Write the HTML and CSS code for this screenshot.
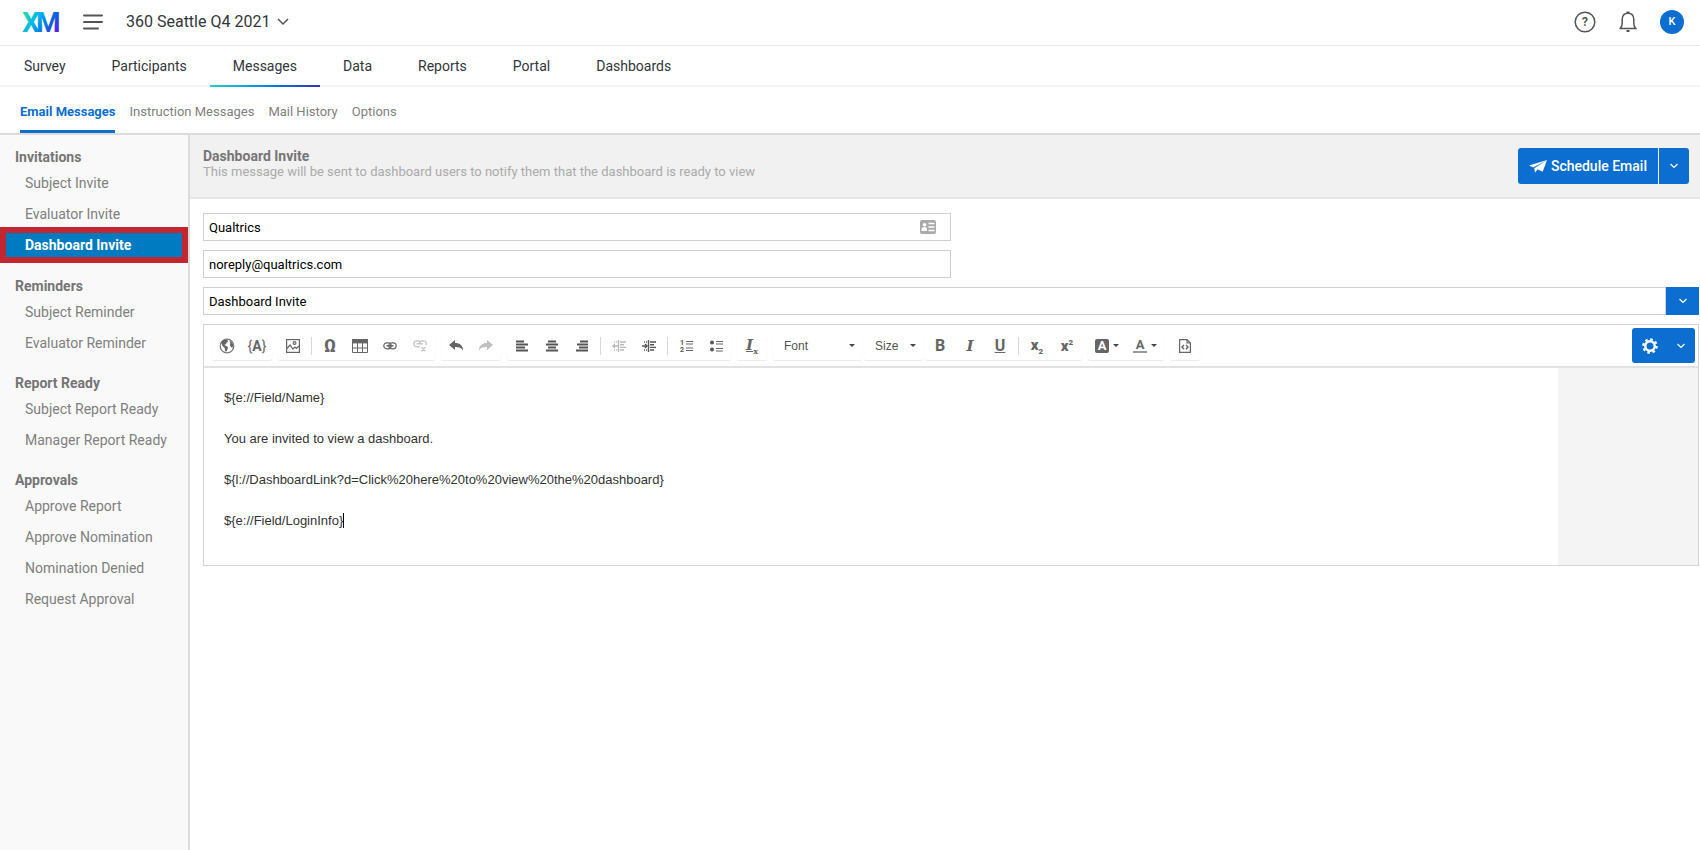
FILE: index.html
```html
<!DOCTYPE html>
<html lang="en">
<head>
  <meta charset="UTF-8">
  <meta name="viewport" content="width=device-width, initial-scale=1.0">
  <title>360 Seattle Q4 2021 - Messages</title>
  <link rel="stylesheet" href="styles.css">
</head>
<body>
<header class="topbar">
  <a href="#" class="logo" aria-label="XM">
    <svg width="38" height="26" viewBox="0 0 38 26">
      <defs>
        <linearGradient id="xm" gradientUnits="userSpaceOnUse" x1="4" y1="2" x2="36" y2="22">
          <stop offset="0" stop-color="#21dbaa"/>
          <stop offset="0.35" stop-color="#00b4ef"/>
          <stop offset="0.7" stop-color="#0768dd"/>
          <stop offset="1" stop-color="#5f1ae5"/>
        </linearGradient>
      </defs>
      <text class="logo-text" x="0" y="23" fill="url(#xm)">X</text>
      <text class="logo-text" x="14" y="23" fill="url(#xm)">M</text>
    </svg>
  </a>
  <button class="icon-btn menu-btn" aria-label="Menu">
    <svg width="20" height="16" viewBox="0 0 20 16" fill="none" stroke="#555" stroke-width="2" stroke-linecap="round"><path d="M1 1.500h18M1 8h18M1 14.500h14"/></svg>
  </button>
  <button class="project">360 Seattle Q4 2021
    <svg width="12" height="8" viewBox="0 0 12 8" fill="none" stroke="#555" stroke-width="1.500"><path d="M1 1l5 5 5-5"/></svg>
  </button>
  <div class="top-right">
    <button class="icon-btn" aria-label="Help">
      <svg width="22" height="22" viewBox="0 0 22 22"><circle cx="11" cy="11" r="9.800" fill="none" stroke="#555" stroke-width="1.500"/><text class="help-mark" x="11" y="15" text-anchor="middle" fill="#555">?</text></svg>
    </button>
    <button class="icon-btn" aria-label="Notifications">
      <svg width="18" height="22" viewBox="0 0 18 22" fill="none" stroke="#555" stroke-width="1.500" stroke-linejoin="round"><path d="M1 17.500c1.800-1.500 2.200-3 2.200-5V8.500C3.200 4.500 5.500 2.200 9 2.200s5.800 2.300 5.800 6.300v4c0 2 .4 3.500 2.200 5z"/><path d="M7.500 1.500h3M7.500 20h3" stroke-width="2"/></svg>
    </button>
    <button class="avatar">K</button>
  </div>
</header>

<nav class="tabs">
  <a href="#">Survey</a>
  <a href="#">Participants</a>
  <a href="#" class="active">Messages</a>
  <a href="#">Data</a>
  <a href="#">Reports</a>
  <a href="#">Portal</a>
  <a href="#">Dashboards</a>
</nav>

<nav class="subtabs">
  <a href="#" class="active">Email Messages</a>
  <a href="#">Instruction Messages</a>
  <a href="#">Mail History</a>
  <a href="#">Options</a>
</nav>

<div class="page">
  <aside class="sidebar">
    <h3>Invitations</h3>
    <a href="#">Subject Invite</a>
    <a href="#">Evaluator Invite</a>
    <a href="#" class="selected">Dashboard Invite</a>
    <h3>Reminders</h3>
    <a href="#">Subject Reminder</a>
    <a href="#">Evaluator Reminder</a>
    <h3>Report Ready</h3>
    <a href="#">Subject Report Ready</a>
    <a href="#">Manager Report Ready</a>
    <h3>Approvals</h3>
    <a href="#">Approve Report</a>
    <a href="#">Approve Nomination</a>
    <a href="#">Nomination Denied</a>
    <a href="#">Request Approval</a>
  </aside>

  <main class="main">
    <div class="message-header">
      <div>
        <h2>Dashboard Invite</h2>
        <p>This message will be sent to dashboard users to notify them that the dashboard is ready to view</p>
      </div>
      <div class="split-btn">
        <button class="schedule">
          <svg width="18" height="13" viewBox="0 0 18 13" fill="#fff"><path d="M18 0L0 5.500l4.300 2zM18 0L5.300 8.200l.7 4.600 2.200-3zM18 0L7.300 8.800l6.400 3z"/></svg>
          Schedule Email
        </button>
        <button class="schedule-more" aria-label="More schedule options">
          <svg width="8" height="6" viewBox="0 0 8 6" fill="none" stroke="#fff" stroke-width="1.200"><path d="M.5 1L4 4.500 7.500 1"/></svg>
        </button>
      </div>
    </div>

    <form class="message-form">
      <div class="field short">
        <input type="text" aria-label="From name" value="Qualtrics">
        <svg class="card-icon" width="16" height="14" viewBox="0 0 16 14"><rect width="16" height="14" rx="2" fill="#aaa"/><circle cx="4.500" cy="4.800" r="1.800" fill="#fff"/><path d="M1.500 11V9.500C1.500 7.800 3 7 4.500 7S7 7.800 7 9.500V11z" fill="#fff"/><path d="M8.500 3.500h6M8.500 7h6M8.500 10.500h6" stroke="#fff" stroke-width="1.600"/></svg>
      </div>
      <div class="field short">
        <input type="text" aria-label="Reply-to email" value="noreply@qualtrics.com">
      </div>
      <div class="field">
        <input type="text" aria-label="Subject" value="Dashboard Invite">
        <button type="button" class="subject-more" aria-label="Subject options">
          <svg width="8" height="6" viewBox="0 0 8 6" fill="none" stroke="#fff" stroke-width="1.200"><path d="M.5 1L4 4.500 7.500 1"/></svg>
        </button>
      </div>

      <div class="editor">
        <div class="toolbar">
          <div class="group">
            <button type="button" aria-label="Language"><svg width="16" height="16" viewBox="0 0 16 16"><circle cx="8" cy="8" r="6.800" fill="#fff" stroke="#777" stroke-width="1.200"/><path d="M2 4.500C3.500 2 6 1.500 8.500 2L9 3.500 7.500 5l-1 1.500L5 7l2 .8 2 1.400-.6 2.300L7 14l-1-1.500-.3-2.500L3.500 8z" fill="#666"/><path d="M10.500 2.500l2.500 1.800L14.300 7l-1 3-1.500-1.300L10.800 7l.6-1.600z" fill="#666"/></svg></button>
            <button type="button" class="glyph" aria-label="Piped text">{<b>A</b>}</button>
          </div>
          <div class="group">
            <button type="button" aria-label="Image"><svg width="14" height="14" viewBox="0 0 14 14" fill="none" stroke="#666" stroke-width="1.200"><rect x=".6" y=".6" width="12.800" height="12.800"/><circle cx="8.500" cy="4" r="1.400"/><path d="M1 9.500l3-3.500 3 4 2-2 1.500 1.500L13 7"/></svg></button>
            <span class="sep"></span>
            <button type="button" class="glyph omega" aria-label="Special character">Ω</button>
            <button type="button" aria-label="Table"><svg width="16" height="14" viewBox="0 0 16 14" fill="none" stroke="#666"><path d="M.5 4v9.500h15V4M.5 9h15M5.500 4v9.500M10.500 4v9.500"/><path d="M0 2.200h16" stroke-width="4.400"/></svg></button>
            <button type="button" aria-label="Link"><svg width="14" height="8" viewBox="0 0 14 8" fill="none" stroke="#666" stroke-width="1.200"><rect x=".8" y=".8" width="7.400" height="6" rx="3"/><rect x="5.800" y=".8" width="7.400" height="6" rx="3"/><path d="M3.500 3.800h7" stroke-width="1.500"/></svg></button>
            <button type="button" class="off" aria-label="Unlink"><svg width="14" height="12" viewBox="0 0 14 12" fill="none" stroke="#666" stroke-width="1.200"><path d="M7 6.800H3.800a3 3 0 0 1 0-6h1.500a3 3 0 0 1 2.500 1.500M6.500 4.200A3 3 0 0 1 9 .8h1.500a2.700 2.700 0 0 1 2.200 4.400M3.500 3.800h6.500M8.500 6.800l4 4.500M12.500 6.800l-4 4.500"/></svg></button>
          </div>
          <div class="group">
            <button type="button" aria-label="Undo"><svg width="14" height="11" viewBox="0 0 14 11" fill="#666"><path d="M0 5L6 0v3c5 0 8 2.500 8 7.500C12 7.500 9.500 6.800 6 7v3z"/></svg></button>
            <button type="button" class="off" aria-label="Redo"><svg width="14" height="11" viewBox="0 0 14 11" fill="#666"><path d="M14 5L8 0v3C3 3 0 5.500 0 10.500 2 7.500 4.500 6.800 8 7v3z"/></svg></button>
          </div>
          <div class="group">
            <button type="button" aria-label="Align left"><svg width="12" height="12" viewBox="0 0 12 12" stroke="#555" stroke-width="2"><path d="M0 1.500h8M0 4.500h12M0 7.500h9M0 10.500h12"/></svg></button>
            <button type="button" aria-label="Center"><svg width="12" height="12" viewBox="0 0 12 12" stroke="#555" stroke-width="2"><path d="M2 1.500h8M0 4.500h12M2 7.500h8M0 10.500h12"/></svg></button>
            <button type="button" aria-label="Align right"><svg width="12" height="12" viewBox="0 0 12 12" stroke="#555" stroke-width="2"><path d="M4 1.500h8M1 4.500h11M3 7.500h9M0 10.500h12"/></svg></button>
            <span class="sep"></span>
            <button type="button" class="off" aria-label="Decrease indent"><svg width="14" height="12" viewBox="0 0 14 12" fill="none" stroke="#555" stroke-width="1.400"><path d="M6.500 0v12M8 2h6M8 4.700h4M8 7.400h6M8 10h4"/><path d="M2 2h4M2 10h4" stroke-dasharray="1 1"/><path d="M6 6H1M3 4L1 6l2 2"/></svg></button>
            <button type="button" aria-label="Increase indent"><svg width="14" height="12" viewBox="0 0 14 12" fill="none" stroke="#555" stroke-width="1.400"><path d="M6.500 0v12M8 2h6M8 4.700h4M8 7.400h6M8 10h4"/><path d="M2 2h4M2 10h4" stroke-dasharray="1 1"/><path d="M0 6h5M3 4l2 2-2 2"/></svg></button>
            <span class="sep"></span>
            <button type="button" aria-label="Numbered list"><svg width="13" height="16" viewBox="0 0 13 16"><path d="M6 3.500h7M6 6h7M6 10h7M6 12.500h7" stroke="#666" stroke-width="1.200"/><text class="list-num" x="0" y="7" fill="#555">1</text><text class="list-num" x="0" y="14" fill="#555">2</text></svg></button>
            <button type="button" aria-label="Bulleted list"><svg width="13" height="12" viewBox="0 0 13 12" fill="#555"><circle cx="2" cy="2.500" r="2"/><circle cx="2" cy="9.500" r="2"/><path d="M6 1.500h7M6 4h7M6 8.500h7M6 11h7" stroke="#666" stroke-width="1.200"/></svg></button>
          </div>
          <div class="group">
            <button type="button" class="glyph clear" aria-label="Remove format"><span><i>I</i><sub>x</sub></span></button>
          </div>
          <label class="group combo font-combo">
            <select aria-label="Font"><option>Font</option></select>
            <span class="caret"></span>
          </label>
          <label class="group combo size-combo">
            <select aria-label="Size"><option>Size</option></select>
            <span class="caret"></span>
          </label>
          <div class="group">
            <button type="button" class="glyph bold" aria-label="Bold">B</button>
            <button type="button" class="glyph italic" aria-label="Italic">I</button>
            <button type="button" class="glyph underline" aria-label="Underline">U</button>
            <span class="sep"></span>
            <button type="button" class="glyph script" aria-label="Subscript"><span>x<sub>2</sub></span></button>
            <button type="button" class="glyph script" aria-label="Superscript"><span>x<sup>2</sup></span></button>
          </div>
          <div class="group">
            <button type="button" class="glyph color" aria-label="Background color"><span class="bg-color">A</span><span class="caret"></span></button>
            <button type="button" class="glyph color" aria-label="Text color"><span class="text-color">A</span><span class="caret"></span></button>
          </div>
          <div class="group">
            <button type="button" aria-label="Source"><svg width="12" height="14" viewBox="0 0 12 14" fill="none" stroke="#666" stroke-width="1.200"><path d="M.6.6h7.400l3.400 3.400v9.400H.6z"/><path d="M8 .6V4h3.400"/><path d="M5 6L3 8l2 2.200M7 6l2 2-2 2.200" stroke-width="1.400"/></svg></button>
          </div>
          <button type="button" class="gear-btn" aria-label="Message options">
            <svg width="16" height="16" viewBox="0 0 16 16" fill="none" stroke="#fff"><circle cx="8" cy="8" r="4.700" stroke-width="2.400"/><circle cx="8" cy="8" r="6.600" stroke-width="2.400" stroke-dasharray="2.600 2.584"/></svg>
            <svg width="8" height="6" viewBox="0 0 8 6" fill="none" stroke="#fff" stroke-width="1.200"><path d="M.5 1L4 4.500 7.500 1"/></svg>
          </button>
        </div>
        <div class="editor-body">
          <div class="editor-text" contenteditable="true" role="textbox" aria-label="Message" spellcheck="false">
            <p>${e://Field/Name}</p>
            <p>You are invited to view a dashboard.</p>
            <p>${l://DashboardLink?d=Click%20here%20to%20view%20the%20dashboard}</p>
            <p><span class="cursor">${e://Field/LoginInfo}</span></p>
          </div>
          <div class="editor-gutter"></div>
        </div>
      </div>
    </form>
  </main>
</div>
</body>
</html>
```

FILE: styles.css
```css
* {
  box-sizing: border-box;
}
body {
  margin: 0;
  min-height: 100vh;
  display: flex;
  flex-direction: column;
  font-family: Roboto, "Liberation Sans", sans-serif;
  font-size: 14px;
  color: #32363a;
  background: #fff;
}
a {
  color: inherit;
  text-decoration: none;
}
button {
  display: flex;
  align-items: center;
  justify-content: center;
  padding: 0;
  border: 0;
  background: none;
  color: inherit;
  font-family: inherit;
  cursor: pointer;
}
h2, h3, p {
  margin: 0;
}
svg {
  flex: none;
}

/* top bar */
.topbar {
  display: flex;
  align-items: center;
  height: 46px;
  padding: 0 16px 2px 22px;
  border-bottom: 1px solid #ebebeb;
}
.logo {
  display: flex;
}
.logo svg {
  overflow: visible;
}
.logo-text {
  font-size: 28px;
  font-weight: bold;
}
.menu-btn {
  margin: 0 23px;
}
.project {
  gap: 7px;
  font-size: 16px;
}
.top-right {
  display: flex;
  align-items: center;
  gap: 23px;
  margin-left: auto;
}
.help-mark {
  font-size: 12px;
  font-weight: bold;
}
.avatar {
  width: 24px;
  height: 24px;
  border-radius: 50%;
  background: #0b6ed0;
  color: #fff;
  font-size: 11px;
  font-weight: 500;
}

/* project tabs */
.tabs {
  display: flex;
  height: 41px;
  padding-left: 1px;
  border-bottom: 2px solid #f4f4f4;
}
.tabs a {
  position: relative;
  padding: 0 23px;
  line-height: 40px;
}
.tabs .active::after {
  content: "";
  position: absolute;
  left: 0;
  right: 0;
  bottom: -2px;
  height: 2px;
  background: linear-gradient(to right, #21d0c5, #0aa5e8, #0b6ed0, #3a32b0);
}
.subtabs {
  display: flex;
  gap: 14px;
  height: 48px;
  padding: 0 20px;
  border-bottom: 2px solid #dcdcdc;
  font-size: 13px;
  color: #808080;
}
.subtabs a {
  height: 46px;
  line-height: 50px;
}
.subtabs .active {
  color: #0b6ed0;
  font-weight: bold;
  border-bottom: 3px solid #0b6ed0;
}

/* message list */
.page {
  display: flex;
  flex: 1;
}
.sidebar {
  flex: none;
  width: 190px;
  padding-top: 12px;
  border-right: 2px solid #dcdcdc;
  background: #f9f9f9;
  color: #808080;
}
.sidebar h3 {
  height: 21px;
  margin-top: 14px;
  padding-left: 15px;
  font-size: 14px;
  line-height: 20px;
  color: #757575;
}
.sidebar h3:first-child {
  margin-top: 0;
}
.sidebar a {
  display: block;
  height: 31px;
  padding-left: 25px;
  line-height: 31px;
}
.sidebar .selected {
  position: relative;
  height: 32px;
  background: #007ac0;
  color: #fff;
  font-weight: bold;
}
.sidebar .selected::after {
  content: "";
  position: absolute;
  inset: -3px 0 -1px 0;
  border: 6px solid #c22631;
}

/* message */
.main {
  flex: 1;
  min-width: 0;
}
.message-header {
  display: flex;
  justify-content: space-between;
  align-items: flex-start;
  height: 64px;
  padding: 13px 11px 0 13px;
  border-bottom: 2px solid #e6e6e6;
  background: #f1f1f1;
}
.message-header h2 {
  font-size: 14px;
  line-height: 16px;
  color: #757575;
}
.message-header p {
  font-size: 13px;
  line-height: 16px;
  color: #aaa;
}
.split-btn {
  display: flex;
  gap: 1px;
  color: #fff;
}
.split-btn button {
  height: 36px;
  background: #0b6ed0;
}
.schedule {
  gap: 4px;
  padding: 0 11px;
  border-radius: 3px 0 0 3px;
  font-size: 14px;
  font-weight: 500;
}
.split-btn .schedule-more {
  width: 30px;
  border-radius: 0 3px 3px 0;
}
.message-form {
  display: flex;
  flex-direction: column;
  gap: 9px;
  padding: 14px 1px 0 13px;
}
.field {
  position: relative;
  display: flex;
  height: 28px;
}
.field.short {
  width: 50%;
  min-width: 748px;
}
.field input {
  flex: 1;
  padding: 0 5px;
  border: 1px solid #d0d0d0;
  font-family: inherit;
  font-size: 13px;
  color: #000;
  outline: 0;
}
.card-icon {
  position: absolute;
  top: 7px;
  right: 15px;
}
.subject-more {
  width: 33px;
  background: #0b6ed0;
}

/* editor */
.editor {
  border: 1px solid #d4d4d4;
}
.toolbar {
  display: flex;
  align-items: center;
  gap: 6px;
  height: 43px;
  padding: 0 3px 0 8px;
  border-bottom: 2px solid #e2e2e2;
}
.group {
  display: flex;
  flex: none;
  align-items: center;
  height: 28px;
  border-radius: 2px;
  box-shadow: 0 1px 1px rgba(0,0,0,0.08);
}
.group button {
  width: 30px;
  height: 28px;
}
.group .off {
  opacity: 0.4;
}
.sep {
  width: 1px;
  height: 18px;
  margin: 0 3px;
  background: #d8d8d8;
}
.glyph {
  color: #666;
  font-size: 14px;
}
.glyph sub, .glyph sup {
  font-size: 8px;
  line-height: 1;
}
.omega {
  font-size: 18px;
  font-weight: bold;
}
.list-num {
  font-size: 7px;
  font-weight: bold;
}
.clear, .italic {
  font-family: "DejaVu Serif", serif;
  font-weight: bold;
  font-size: 15px;
}
.italic {
  font-style: italic;
}
.clear i {
  text-decoration: underline;
}
.bold, .underline {
  font-size: 16px;
  font-weight: bold;
}
.underline {
  text-decoration: underline;
}
.script {
  font-size: 15px;
  font-weight: 900;
}
.combo {
  padding: 0 7px 0 11px;
}
.combo select {
  flex: 1;
  min-width: 0;
  padding: 0;
  border: 0;
  appearance: none;
  background: none;
  color: #555;
  font-family: "Liberation Sans", sans-serif;
  font-size: 12px;
}
.font-combo {
  width: 89px;
}
.size-combo {
  width: 59px;
  margin-left: -4px;
}
.size-combo + .group {
  margin-left: -4px;
}
.caret {
  border: 3px solid transparent;
  border-top-color: #444;
  border-bottom: 0;
}
.group .color {
  width: 38px;
  gap: 4px;
}
.bg-color {
  width: 14px;
  border-radius: 2px;
  background: #666;
  color: #fff;
  font-size: 13px;
  font-weight: bold;
  line-height: 14px;
}
.text-color {
  width: 14px;
  border-bottom: 2px solid #999;
  font-size: 13px;
  font-weight: bold;
  line-height: 13px;
}
.gear-btn {
  flex: none;
  gap: 19px;
  width: 63px;
  height: 35px;
  margin-left: auto;
  border-radius: 3px;
  background: #0b6ed0;
}
.editor-body {
  display: flex;
  min-height: 197px;
}
.editor-text {
  flex: 1;
  padding: 19px 20px;
  font-family: "Liberation Sans", sans-serif;
  font-size: 13px;
  line-height: 21px;
  color: #333;
  outline: 0;
}
.editor-text p {
  margin-bottom: 20px;
}
.editor-text p:last-child {
  margin-bottom: 0;
}
.cursor {
  border-right: 1px solid #000;
}
.editor-gutter {
  width: 140px;
  background: #f4f4f4;
}
```
